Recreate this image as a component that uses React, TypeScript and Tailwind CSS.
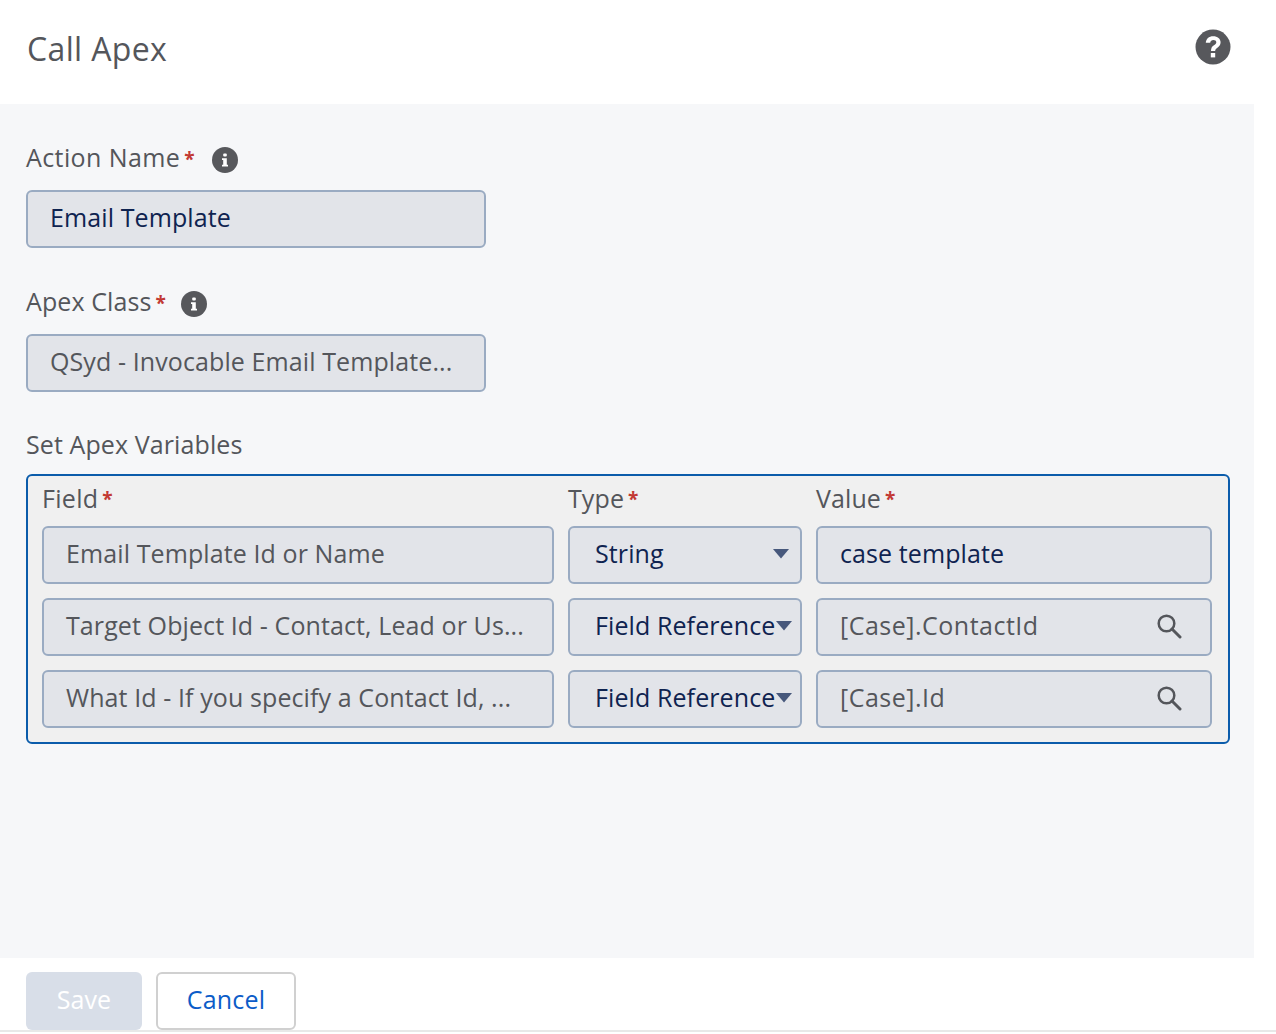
const font = { fontFamily: '"Open Sans", sans-serif' }

function Required() {
  return <span className="ml-[4px] text-[19px] leading-none text-[#c23934] font-bold self-start mt-[8px]">*</span>
}

function InfoIcon() {
  return (
    <svg width="26" height="28" viewBox="0 0 26 28" className="block">
      <circle cx="13" cy="14" r="13" fill="#57585c" />
      <rect x="11.2" y="7.5" width="3.6" height="3" rx="1" fill="#fff" />
      <path d="M10 12.2h4.8v6.6H16v1.7h-6v-1.7h1.2v-4.9H10z" fill="#fff" />
    </svg>
  )
}

function SearchIcon() {
  return (
    <svg width="26" height="26" viewBox="0 0 26 26" className="block">
      <circle cx="10.500" cy="10.500" r="7.800" fill="none" stroke="#54565b" strokeWidth="2.500" />
      <path d="M16 16l8 8" fill="none" stroke="#54565b" strokeWidth="3" strokeLinecap="round" />
    </svg>
  )
}

function Caret() {
  return (
    <svg width="18" height="11" viewBox="0 0 18 11" className="block shrink-0">
      <path d="M1 1h16L9 10.5z" fill="#47587c" />
    </svg>
  )
}

function Field({ children, className = "" }: { children: React.ReactNode; className?: string }) {
  return (
    <div className={`h-[58px] flex items-center rounded-[6px] border-2 border-[#9aabc2] bg-[#e2e4e9] pb-[3px] text-[25px] tracking-[0.1px] whitespace-nowrap overflow-hidden ${className}`}>
      {children}
    </div>
  )
}

const rows = [
  { field: "Email Template Id or Name", type: "String", value: "case template", ref: false },
  { field: "Target Object Id - Contact, Lead or Us...", type: "Field Reference", value: "[Case].ContactId", ref: true },
  { field: "What Id - If you specify a Contact Id, ...", type: "Field Reference", value: "[Case].Id", ref: true },
]

export default function App() {
  return (
    <div style={font} className="w-[1276px] h-[1034px] bg-white flex flex-col overflow-hidden">
      {/* Header */}
      <header className="w-[1254px] h-[104px] shrink-0 pl-[27px] pr-[23px] flex items-start justify-between">
        <h1 className="mt-[27px] text-[32px] leading-[44px] tracking-[0.35px] text-[#54565b]">Call Apex</h1>
        <svg width="36" height="36" viewBox="0 0 36 36" className="mt-[29px] block">
          <circle cx="18" cy="18" r="17.500" fill="#57585c" />
          <path d="M10.800 13.800C11 9.800 13.900 7.200 18.200 7.200c4.300 0 7.400 2.500 7.400 6.100 0 2.600-1.300 4.200-3.500 5.600-1.500 1-1.900 1.600-1.900 3.200h-4.200c0-3 .8-4.500 3-5.900 1.700-1.100 2.300-1.800 2.300-2.900 0-1.300-1.200-2.200-2.900-2.200-1.800 0-2.900 1-3.200 2.700z" fill="#fff" />
          <rect x="15.800" y="24" width="4.400" height="4.400" fill="#fff" />
        </svg>
      </header>

      {/* Body */}
      <main className="w-[1254px] h-[854px] shrink-0 bg-[#f6f7f9] pt-[38px] pl-[26px] pr-[24px]">
        <div className="flex items-center h-[34px] pb-[2px] text-[25px] tracking-[0.1px] text-[#54565b]">
          <span className="tracking-[0.4px]">Action Name</span>
          <Required />
          <span className="ml-[17px] mt-[4px]"><InfoIcon /></span>
        </div>
        <Field className="w-[460px] mt-[14px] pl-[22px] text-[#0f2350]">Email Template</Field>

        <div className="flex items-center h-[34px] mt-[38px] pb-[2px] text-[25px] tracking-[0.1px] text-[#54565b]">
          <span>Apex Class</span>
          <Required />
          <span className="ml-[15px] mt-[4px]"><InfoIcon /></span>
        </div>
        <Field className="w-[460px] mt-[14px] pl-[22px] text-[#54565b]">QSyd - Invocable Email Template...</Field>

        <div className="mt-[37px] h-[34px] pb-[2px] flex items-center text-[25px] tracking-[0.1px] text-[#54565b]">Set Apex Variables</div>

        <section className="mt-[11px] w-[1204px] h-[270px] rounded-[6px] border-2 border-[#0b5cab] bg-[#f0f0f0] pl-[14px] pr-[16px]">
          <div className="grid grid-cols-[512px_234px_396px] gap-x-[14px] h-[50px] pt-[6px] text-[25px] tracking-[0.1px] text-[#54565b]">
            <div className="flex items-center h-[34px]"><span className="tracking-[0.3px]">Field</span><Required /></div>
            <div className="flex items-center h-[34px]">Type<Required /></div>
            <div className="flex items-center h-[34px]">Value<Required /></div>
          </div>
          <div className="flex flex-col gap-y-[14px]">
            {rows.map((r) => (
              <div key={r.field} className="grid grid-cols-[512px_234px_396px] gap-x-[14px]">
                <Field className="pl-[22px] text-[#54565b]">{r.field}</Field>
                <Field className="justify-between pl-[25px] pr-[10px] text-[#0f2350]">
                  <span>{r.type}</span>
                  <Caret />
                </Field>
                <Field className={`justify-between pl-[22px] pr-[28px] ${r.ref ? "text-[#54565b] tracking-[0.5px]" : "text-[#0f2350]"}`}>
                  <span>{r.value}</span>
                  {r.ref && <SearchIcon />}
                </Field>
              </div>
            ))}
          </div>
        </section>
      </main>

      {/* Footer */}
      <footer className="h-[74px] shrink-0 border-b-2 border-[#e8e8e8] pl-[26px] pt-[14px] flex items-start gap-x-[14px]">
        <button className="w-[116px] h-[58px] pb-[3px] rounded-[6px] bg-[#d8dee8] text-white text-[25px] tracking-[0.1px]">Save</button>
        <button className="w-[140px] h-[58px] pb-[3px] rounded-[6px] border-2 border-[#d0d0d0] bg-white text-[#0b5cc8] text-[25px] tracking-[0.2px]">Cancel</button>
      </footer>
    </div>
  )
}
